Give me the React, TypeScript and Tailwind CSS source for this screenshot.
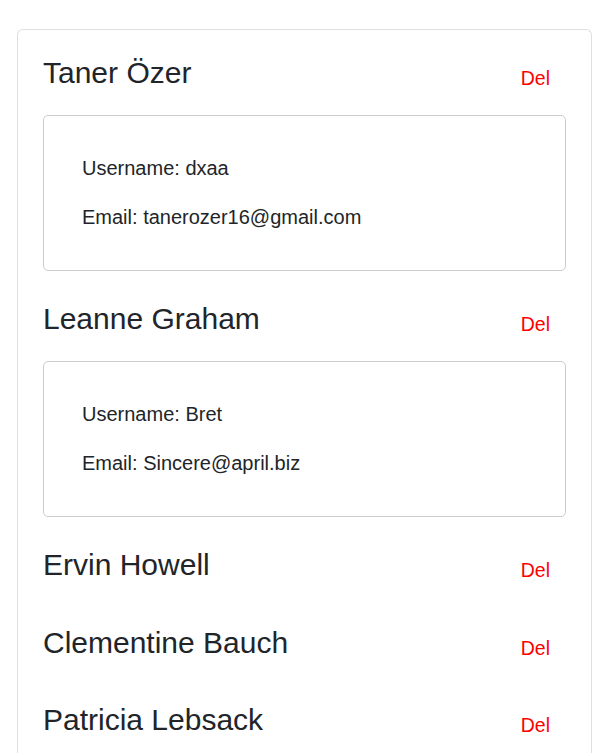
import React from "react";

type User = { name: string; username?: string; email?: string };

const users: User[] = [
  { name: "Taner Özer", username: "dxaa", email: "tanerozer16@gmail.com" },
  { name: "Leanne Graham", username: "Bret", email: "Sincere@april.biz" },
  { name: "Ervin Howell" },
  { name: "Clementine Bauch" },
  { name: "Patricia Lebsack" },
];

export default function App() {
  return (
    <div
      className="min-h-[753px] bg-white pt-[29px] pl-[17px] text-[#212529]"
      style={{ fontFamily: '"Liberation Sans", Arial, sans-serif' }}
    >
      <div className="w-[575px] rounded-t-[6px] border border-b-0 border-[#dfdfdf] px-[25px] pt-[25px] pb-[40px]">
        <div className="flex flex-col gap-[17.5px]">
          {users.map((u) => (
            <div key={u.name} className="flex flex-col">
              <div className="flex h-[60px] items-start justify-between">
                <h3 className="m-0 text-[30px] font-normal leading-[36px]">{u.name}</h3>
                <span className="mt-[9px] mr-[16px] cursor-pointer text-[19.5px] leading-[29px] text-[#ff0000]">
                  Del
                </span>
              </div>
              {u.username && (
                <div className="mb-[12.5px] h-[156px] rounded-[5px] border border-[#cccccc] pl-[38px] pt-[37px]">
                  <p className="m-0 text-[20px] leading-[30px]">Username: {u.username}</p>
                  <p className="m-0 mt-[19px] text-[20px] leading-[30px]">Email: {u.email}</p>
                </div>
              )}
            </div>
          ))}
        </div>
      </div>
    </div>
  );
}
